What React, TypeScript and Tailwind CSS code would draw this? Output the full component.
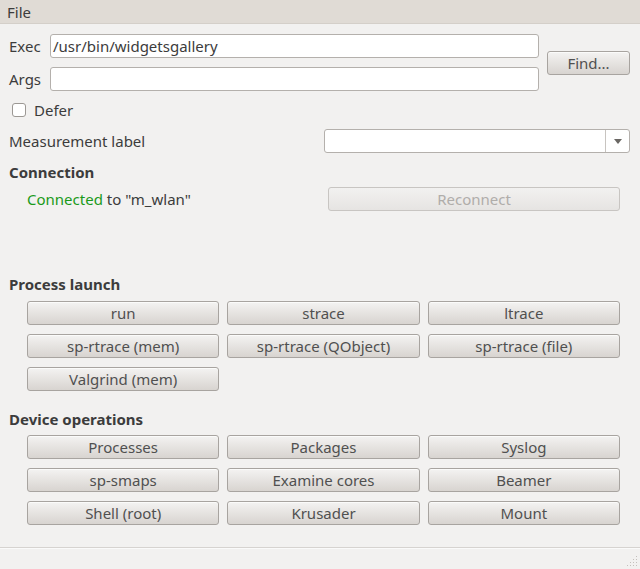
import React from 'react'

const btn =
  'h-[24px] rounded-[3px] border border-[#a8a4a0] bg-gradient-to-b from-[#f4f3f2] to-[#d8d4d0] text-[15px] leading-[22px] text-[#505050] shadow-[inset_0_1px_0_#fbfbfa]'

const GridButtons: React.FC<{ items: string[] }> = ({ items }) => (
  <div className="grid grid-cols-3 gap-x-[8px] gap-y-[9px] pl-[27px] pr-[20px]">
    {items.map((label) => (
      <button key={label} className={btn}>
        {label}
      </button>
    ))}
  </div>
)

const Input: React.FC<{ value?: string }> = ({ value }) => (
  <div className="h-[24px] flex-1 rounded-[3px] border border-[#b4b0ac] bg-white px-[2px] text-[15px] leading-[22px] text-[#3c3c3c]">
    {value}
  </div>
)

const App: React.FC = () => {
  return (
    <div
      className="flex h-[569px] w-[640px] flex-col bg-[#f2f1f0] text-[15px] leading-[20px] text-[#3c3c3c]"
      style={{ fontFamily: '"Noto Sans", "DejaVu Sans", sans-serif' }}
    >
      {/* menu bar */}
      <div className="h-[24px] border-b border-[#d4cfc9] bg-[#e0dbd5] pl-[7px] leading-[24px]">
        File
      </div>

      <div className="flex-1">
        {/* exec / args */}
        <div className="mt-[10px] flex items-center pr-[10px]">
          <div className="flex flex-1 flex-col gap-[9px]">
            <div className="flex items-center">
              <span className="w-[50px] pl-[9px]">Exec</span>
              <Input value="/usr/bin/widgetsgallery" />
            </div>
            <div className="flex items-center">
              <span className="w-[50px] pl-[9px]">Args</span>
              <Input />
            </div>
          </div>
          <button className={`${btn} ml-[8px] w-[83px]`}>Find...</button>
        </div>

        <label className="mt-[9px] flex items-center pl-[12px]">
          <span className="h-[14px] w-[14px] rounded-[3px] border border-[#9c9894] bg-white" />
          <span className="ml-[8px]">Defer</span>
        </label>

        <div className="mt-[9px] flex items-center pl-[9px] pr-[10px]">
          <span className="flex-1">Measurement label</span>
          <div className="flex h-[24px] w-[306px] rounded-[3px] border border-[#b4b0ac] bg-white">
            <div className="flex-1" />
            <div className="flex w-[24px] items-center justify-center border-l border-[#c8c4c0]">
              <svg width="8" height="5" viewBox="0 0 8 5">
                <path d="M0 0h8L4 5z" fill="#6a6763" />
              </svg>
            </div>
          </div>
        </div>

        <div className="mt-[9px] pl-[9px] font-bold">Connection</div>
        <div className="mt-[5px] flex items-center pl-[27px] pr-[20px]">
          <span className="flex-1">
            <span className="text-[#1a9a1a]">Connected</span> to "m_wlan"
          </span>
          <button className="h-[24px] w-[292px] rounded-[3px] border border-[#c8c5c2] bg-gradient-to-b from-[#f2f1f0] to-[#e6e4e2] text-[15px] text-[#b0adaa]">
            Reconnect
          </button>
        </div>

        <div className="mt-[63px] pl-[9px] font-bold">Process launch</div>
        <div className="mt-[7px]">
          <GridButtons
            items={['run', 'strace', 'ltrace', 'sp-rtrace (mem)', 'sp-rtrace (QObject)', 'sp-rtrace (file)']}
          />
          <div className="mt-[9px] grid grid-cols-3 gap-x-[8px] pl-[27px] pr-[20px]">
            <button className={btn}>Valgrind (mem)</button>
          </div>
        </div>

        <div className="mt-[18px] pl-[9px] font-bold">Device operations</div>
        <div className="mt-[6px]">
          <GridButtons
            items={[
              'Processes',
              'Packages',
              'Syslog',
              'sp-smaps',
              'Examine cores',
              'Beamer',
              'Shell (root)',
              'Krusader',
              'Mount',
            ]}
          />
        </div>
      </div>

      {/* status bar */}
      <div className="relative h-[22px] border-t border-[#d6d3d0] shadow-[inset_0_1px_0_#fafafa]">
        <svg className="absolute bottom-[2px] right-[2px]" width="12" height="12" viewBox="0 0 12 12">
          {[
            [10, 2],
            [10, 5],
            [7, 5],
            [10, 8],
            [7, 8],
            [4, 8],
            [10, 11],
            [7, 11],
            [4, 11],
            [1, 11],
          ].map(([x, y]) => (
            <rect key={`${x}-${y}`} x={x} y={y - 1} width="1" height="1" fill="#c4c0bc" />
          ))}
        </svg>
      </div>
    </div>
  )
}

export default App
